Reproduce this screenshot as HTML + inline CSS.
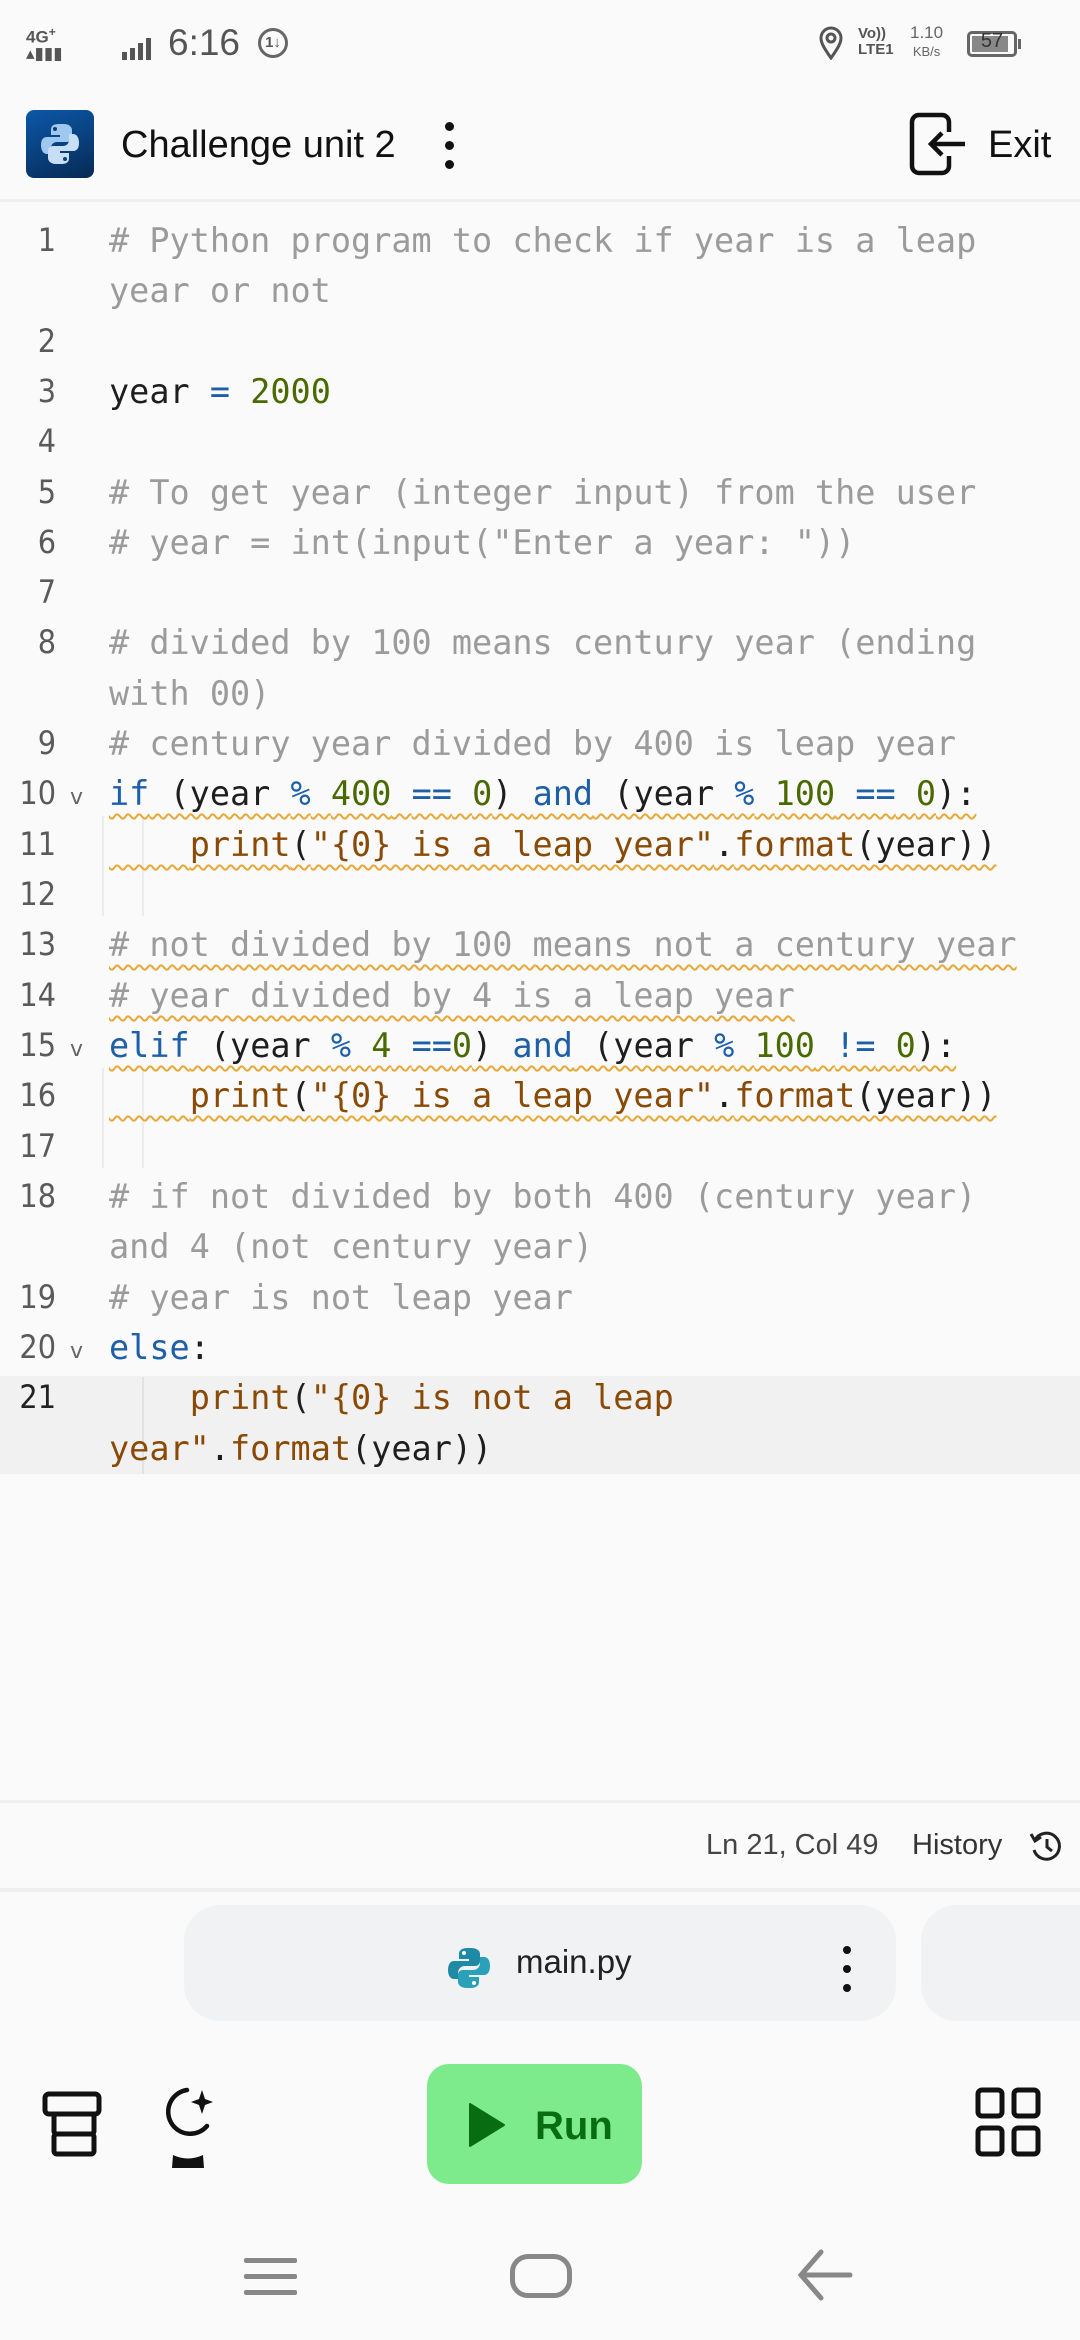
<!DOCTYPE html>
<html><head><meta charset="utf-8"><style>
*{margin:0;padding:0;box-sizing:border-box}
body{width:1080px;height:2340px;background:#fafafa;position:relative;overflow:hidden;font-family:"Liberation Sans","DejaVu Sans",sans-serif}
.abs{position:absolute}
.row{position:absolute;left:0;width:1080px;height:50px;line-height:50px}
.ln{position:absolute;left:0;width:56px;text-align:right;font-family:"DejaVu Sans Condensed","DejaVu Sans",sans-serif;font-size:32px;color:#5a5a5a;top:1px}
.fold{position:absolute;left:70px;font-size:22px;color:#666;font-family:"DejaVu Sans",sans-serif;top:6px}
.code{position:absolute;left:109px;top:2px;font-family:"DejaVu Sans Mono",monospace;font-size:33.5px;white-space:pre;color:#1e1e1e}
.c{color:#9b9b9b}.k{color:#1d5fa8}.n{color:#4a6a00}.s{color:#8a4a05}
.sq{text-decoration:underline wavy #e8a838;text-decoration-thickness:2px;text-underline-offset:8px}
.guide{position:absolute;width:2px;background:#ececec}
.bar{position:absolute;bottom:0;width:5px;background:#555}
</style></head><body>

<!-- status bar -->
<div class="abs" style="left:26px;top:24px;font-size:17px;font-weight:bold;color:#555;line-height:16px">4G<sup style="font-size:12px">+</sup><br>▴▮▮▮</div>
<div class="abs" style="left:122px;top:36px;width:36px;height:24px">
<div class="bar" style="left:0;height:8px"></div><div class="bar" style="left:8px;height:12px"></div><div class="bar" style="left:16px;height:17px"></div><div class="bar" style="left:24px;height:22px"></div></div>
<div class="abs" style="left:168px;top:22px;font-size:37px;color:#555">6:16</div>
<div class="abs" style="left:258px;top:28px;width:30px;height:30px;border:3px solid #666;border-radius:50%;font-size:15px;text-align:center;line-height:24px;color:#555;font-weight:bold">1↓</div>
<svg class="abs" style="left:818px;top:26px" width="26" height="34" viewBox="0 0 26 34"><path d="M13 32 C6 22 3 17 3 12 A10 10 0 0 1 23 12 C23 17 20 22 13 32Z" fill="none" stroke="#555" stroke-width="3"/><circle cx="13" cy="12" r="4" fill="none" stroke="#555" stroke-width="3"/></svg>
<div class="abs" style="left:858px;top:26px;font-size:15px;font-weight:bold;color:#555;line-height:16px">Vo))<br>LTE1</div>
<div class="abs" style="left:910px;top:24px;font-size:17px;color:#666;line-height:18px;text-align:center">1.10<br><span style="font-size:13px">KB/s</span></div>
<div class="abs" style="left:967px;top:31px;width:50px;height:26px;border:3px solid #666;border-radius:5px"><div style="position:absolute;left:2px;top:2px;width:36px;height:16px;background:#888"></div><div style="position:absolute;left:0;top:-4px;width:44px;text-align:center;font-size:20px;color:#333">57</div></div>
<div class="abs" style="left:1018px;top:39px;width:3px;height:10px;background:#666"></div>

<!-- header -->
<div class="abs" style="left:26px;top:110px;width:68px;height:68px;border-radius:8px;background:linear-gradient(160deg,#0c58a8,#062a55)">
<svg width="68" height="68" viewBox="0 0 68 68"><path d="M33 14c-7 0-8 3-8 6v5h9v2H21c-4 0-6 3-6 8s2 9 6 9h4v-6c0-4 3-6 6-6h10c3 0 5-2 5-5v-7c0-3-3-6-8-6z" fill="#9ec8f0"/><path d="M35 54c7 0 8-3 8-6v-5h-9v-2h13c4 0 6-3 6-8s-2-9-6-9h-4v6c0 4-3 6-6 6H27c-3 0-5 2-5 5v7c0 3 3 6 8 6z" fill="#c8def5"/><circle cx="29" cy="19" r="2" fill="#0c3f7a"/><circle cx="39" cy="49" r="2" fill="#0c3f7a"/></svg></div>
<div class="abs" style="left:121px;top:124px;font-size:38px;color:#111;font-weight:500">Challenge unit 2</div>
<div class="abs" style="left:445px;top:122px;width:10px;height:48px"><div style="width:9px;height:9px;background:#111;border-radius:50%;margin-bottom:10px"></div><div style="width:9px;height:9px;background:#111;border-radius:50%;margin-bottom:10px"></div><div style="width:9px;height:9px;background:#111;border-radius:50%"></div></div>
<svg class="abs" style="left:909px;top:112px" width="60" height="64" viewBox="0 0 60 64"><path d="M33 3H10a7 7 0 0 0-7 7v44a7 7 0 0 0 7 7h23a7 7 0 0 0 7-7V44M40 20V10a7 7 0 0 0-7-7" fill="none" stroke="#111" stroke-width="4.5"/><path d="M56 32H22M33 21L22 32l11 11" fill="none" stroke="#111" stroke-width="4.5"/></svg>
<div class="abs" style="left:988px;top:124px;font-size:38px;color:#111">Exit</div>
<div class="abs" style="left:0;top:199px;width:1080px;height:3px;background:#efefef"></div>

<!-- active line -->
<div class="abs" style="left:0;top:1376px;width:1080px;height:98px;background:#f1f1f1"></div>
<div class="guide" style="left:102px;top:816px;height:100px"></div>
<div class="guide" style="left:142px;top:816px;height:100px"></div>
<div class="guide" style="left:102px;top:1068px;height:100px"></div>
<div class="guide" style="left:142px;top:1068px;height:100px"></div>
<div class="guide" style="left:142px;top:1377px;height:97px;background:#e2e2e2"></div>

<div class="row" style="top:214px"><span class="ln">1</span><span class="code c"># Python program to check if year is a leap</span></div>
<div class="row" style="top:264px"><span class="code c">year or not</span></div>
<div class="row" style="top:315px"><span class="ln">2</span></div>
<div class="row" style="top:365px"><span class="ln">3</span><span class="code">year <span class="k">=</span> <span class="n">2000</span></span></div>
<div class="row" style="top:415px"><span class="ln">4</span></div>
<div class="row" style="top:466px"><span class="ln">5</span><span class="code c"># To get year (integer input) from the user</span></div>
<div class="row" style="top:516px"><span class="ln">6</span><span class="code c"># year = int(input("Enter a year: "))</span></div>
<div class="row" style="top:566px"><span class="ln">7</span></div>
<div class="row" style="top:616px"><span class="ln">8</span><span class="code c"># divided by 100 means century year (ending</span></div>
<div class="row" style="top:667px"><span class="code c">with 00)</span></div>
<div class="row" style="top:717px"><span class="ln">9</span><span class="code c"># century year divided by 400 is leap year</span></div>
<div class="row" style="top:767px"><span class="ln">10</span><span class="fold">v</span><span class="code sq"><span class="k">if</span> (year <span class="k">%</span> <span class="n">400</span> <span class="k">==</span> <span class="n">0</span>) <span class="k">and</span> (year <span class="k">%</span> <span class="n">100</span> <span class="k">==</span> <span class="n">0</span>):</span></div>
<div class="row" style="top:818px"><span class="ln">11</span><span class="code sq">    <span class="s">print</span>(<span class="s">"{0} is a leap year"</span>.<span class="s">format</span>(year))</span></div>
<div class="row" style="top:868px"><span class="ln">12</span></div>
<div class="row" style="top:918px"><span class="ln">13</span><span class="code c sq"># not divided by 100 means not a century year</span></div>
<div class="row" style="top:969px"><span class="ln">14</span><span class="code c sq"># year divided by 4 is a leap year</span></div>
<div class="row" style="top:1019px"><span class="ln">15</span><span class="fold">v</span><span class="code sq"><span class="k">elif</span> (year <span class="k">%</span> <span class="n">4</span> <span class="k">==</span><span class="n">0</span>) <span class="k">and</span> (year <span class="k">%</span> <span class="n">100</span> <span class="k">!=</span> <span class="n">0</span>):</span></div>
<div class="row" style="top:1069px"><span class="ln">16</span><span class="code sq">    <span class="s">print</span>(<span class="s">"{0} is a leap year"</span>.<span class="s">format</span>(year))</span></div>
<div class="row" style="top:1120px"><span class="ln">17</span></div>
<div class="row" style="top:1170px"><span class="ln">18</span><span class="code c"># if not divided by both 400 (century year)</span></div>
<div class="row" style="top:1220px"><span class="code c">and 4 (not century year)</span></div>
<div class="row" style="top:1271px"><span class="ln">19</span><span class="code c"># year is not leap year</span></div>
<div class="row" style="top:1321px"><span class="ln">20</span><span class="fold">v</span><span class="code"><span class="k">else</span>:</span></div>
<div class="row" style="top:1371px"><span class="ln" style="color:#222">21</span><span class="code">    <span class="s">print</span>(<span class="s">"{0} is not a leap</span></span></div>
<div class="row" style="top:1422px"><span class="code"><span class="s">year"</span>.<span class="s">format</span>(year))</span></div>

<!-- bottom status -->
<div class="abs" style="left:0;top:1800px;width:1080px;height:3px;background:#efefef"></div>
<div class="abs" style="left:706px;top:1829px;font-size:29px;color:#444">Ln 21, Col 49</div>
<div class="abs" style="left:912px;top:1829px;font-size:29px;color:#333">History</div>
<svg class="abs" style="left:1028px;top:1830px" width="36" height="32" viewBox="0 0 36 32"><path d="M7 10A13 13 0 1 1 6 20" fill="none" stroke="#222" stroke-width="3"/><path d="M3 4l4 7 6-4" fill="none" stroke="#222" stroke-width="3"/><path d="M19 9v8l5 4" fill="none" stroke="#222" stroke-width="3"/></svg>
<div class="abs" style="left:0;top:1888px;width:1080px;height:4px;background:#efefef"></div>

<div class="abs" style="left:184px;top:1905px;width:712px;height:116px;background:#f1f2f3;border-radius:36px"></div>
<div class="abs" style="left:921px;top:1905px;width:200px;height:116px;background:#f1f2f3;border-radius:36px"></div>
<svg class="abs" style="left:447px;top:1946px" width="44" height="44" viewBox="0 0 44 44"><path d="M21 2c-7 0-9 3-9 6v5h10v2H7c-4 0-6 4-6 9s2 9 6 9h4v-6c0-4 3-7 7-7h10c3 0 5-2 5-5V8c0-3-3-6-9-6z" fill="#1e8aa6"/><path d="M23 42c7 0 9-3 9-6v-5H22v-2h15c4 0 6-4 6-9s-2-9-6-9h-4v6c0 4-3 7-7 7H16c-3 0-5 2-5 5v7c0 3 3 6 9 6z" fill="#2aa0ba"/><circle cx="17" cy="7" r="2" fill="#fff"/><circle cx="27" cy="37" r="2" fill="#fff"/></svg>
<div class="abs" style="left:516px;top:1943px;font-size:33px;color:#222">main.py</div>
<div class="abs" style="left:843px;top:1946px"><div style="width:8px;height:8px;background:#111;border-radius:50%;margin-bottom:11px"></div><div style="width:8px;height:8px;background:#111;border-radius:50%;margin-bottom:11px"></div><div style="width:8px;height:8px;background:#111;border-radius:50%"></div></div>

<!-- toolbar -->
<svg class="abs" style="left:40px;top:2090px" width="64" height="70" viewBox="0 0 64 70"><rect x="5" y="4" width="54" height="20" rx="4" fill="none" stroke="#111" stroke-width="5"/><rect x="14" y="24" width="40" height="20" rx="3" fill="none" stroke="#111" stroke-width="5"/><rect x="14" y="44" width="40" height="20" rx="3" fill="none" stroke="#111" stroke-width="5"/></svg>
<svg class="abs" style="left:160px;top:2080px" width="60" height="90" viewBox="0 0 60 90"><path d="M27 10A22 22 0 1 0 47 46" fill="none" stroke="#111" stroke-width="4.5" stroke-linecap="round"/><path d="M42 10l3 9 8 3-8 3-3 9-3-9-8-3 8-3z" fill="#111"/><path d="M12 88L13 75Q28 82 43 75L44 88Z" fill="#111"/></svg>
<div class="abs" style="left:427px;top:2064px;width:215px;height:120px;background:#7deb8b;border-radius:22px"></div>
<svg class="abs" style="left:468px;top:2102px" width="40" height="46" viewBox="0 0 40 46"><path d="M2 2L36 23L2 44Z" fill="#086d12" stroke="#086d12" stroke-linejoin="round" stroke-width="2"/></svg>
<div class="abs" style="left:535px;top:2104px;font-size:40px;color:#086d12;font-weight:bold">Run</div>
<svg class="abs" style="left:974px;top:2086px" width="68" height="72" viewBox="0 0 68 72"><rect x="4" y="4" width="24" height="26" rx="4" fill="none" stroke="#111" stroke-width="5"/><rect x="40" y="4" width="24" height="26" rx="4" fill="none" stroke="#111" stroke-width="5"/><rect x="4" y="42" width="24" height="26" rx="4" fill="none" stroke="#111" stroke-width="5"/><rect x="40" y="42" width="24" height="26" rx="4" fill="none" stroke="#111" stroke-width="5"/></svg>

<!-- nav bar -->
<div class="abs" style="left:244px;top:2258px;width:53px;height:5px;background:#888;border-radius:2px"></div>
<div class="abs" style="left:244px;top:2274px;width:53px;height:5px;background:#888;border-radius:2px"></div>
<div class="abs" style="left:244px;top:2290px;width:53px;height:5px;background:#888;border-radius:2px"></div>
<div class="abs" style="left:510px;top:2254px;width:62px;height:44px;border:5px solid #888;border-radius:18px"></div>
<svg class="abs" style="left:796px;top:2248px" width="58" height="56" viewBox="0 0 58 56"><path d="M54 27H6M25 4L5 27l20 23" fill="none" stroke="#888" stroke-width="5" stroke-linecap="round"/></svg>
</body></html>
